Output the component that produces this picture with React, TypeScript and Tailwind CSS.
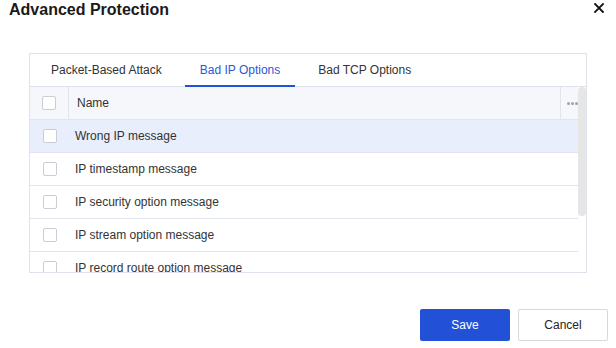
import { useState } from "react";

const tabs = ["Packet-Based Attack", "Bad IP Options", "Bad TCP Options"];

const rows = [
  "Wrong IP message",
  "IP timestamp message",
  "IP security option message",
  "IP stream option message",
  "IP record route option message",
];

function Checkbox() {
  return (
    <span className="block h-[14px] w-[14px] rounded-[2px] border border-[#c9cdd4] bg-white" />
  );
}

export default function App() {
  const [activeTab, setActiveTab] = useState(1);

  return (
    <div
      className="relative h-[348px] w-[616px] overflow-hidden bg-white text-[12px] text-[#333333]"
      style={{ fontFamily: '"Liberation Sans", Arial, sans-serif' }}
    >
      <div className="flex h-5 items-start justify-between pl-[9px]">
        <h1 className="text-[16px] font-bold leading-5 text-[#1a1a1a]">
          Advanced Protection
        </h1>
        <button className="mr-[12px] mt-[3px] h-[10px] w-[10px]">
          <svg viewBox="0 0 10 10" className="block h-[10px] w-[10px]">
            <path
              d="M1 1 L9 9 M9 1 L1 9"
              stroke="#111"
              strokeWidth="1.8"
              strokeLinecap="square"
            />
          </svg>
        </button>
      </div>

      <div className="ml-[29px] mt-[33px] flex h-[220px] w-[558px] flex-col border border-[#dfe2ea]">
        <div className="flex h-[33px] shrink-0 gap-2 border-b border-[#dfe2ea] pl-[6px]">
          {tabs.map((tab, index) => (
            <button
              key={tab}
              onClick={() => setActiveTab(index)}
              className={`relative px-[15px] leading-[32px] ${
                activeTab === index ? "text-[#2a57d6]" : "text-[#333333]"
              }`}
            >
              {tab}
              {activeTab === index ? (
                <span className="absolute bottom-[-1px] left-0 right-0 h-[2px] bg-[#2352d8]" />
              ) : null}
            </button>
          ))}
        </div>

        <div className="flex min-h-0 flex-1">
          <div className="w-[548px] overflow-hidden">
            <div className="flex h-[33px] items-center border-b border-[#e1e4ec] bg-[#f5f7fa]">
              <div className="flex h-full w-[39px] items-center justify-center border-r border-[#e1e4ec]">
                <Checkbox />
              </div>
              <div className="flex h-full flex-1 items-center border-r border-[#e1e4ec] pl-2">
                Name
              </div>
              <div className="flex h-full w-[17px] items-center pl-[6px]">
                <span className="flex gap-[1px]">
                  <span className="h-[3px] w-[3px] rounded-full bg-[#9aa3b2]" />
                  <span className="h-[3px] w-[3px] rounded-full bg-[#9aa3b2]" />
                  <span className="h-[3px] w-[3px] rounded-full bg-[#9aa3b2]" />
                </span>
              </div>
            </div>

            {rows.map((row, index) => (
              <div
                key={row}
                className={`flex h-[33px] shrink-0 items-center border-b border-[#e1e4ec] ${
                  index === 0 ? "bg-[#e8eefc]" : "bg-white"
                }`}
              >
                <div className="flex w-[39px] justify-center pl-[1px]">
                  <Checkbox />
                </div>
                <div className="pl-[6px]">{row}</div>
              </div>
            ))}
          </div>

          <div className="w-[8px]">
            <div className="h-[129px] w-[8px] rounded-full bg-[#e6e6e6]" />
          </div>
        </div>
      </div>

      <div className="mt-[36px] flex justify-end gap-2 pr-[8px]">
        <button className="h-[32px] w-[90px] rounded-[2px] bg-[#2251d8] text-white">
          Save
        </button>
        <button className="h-[32px] w-[90px] rounded-[2px] border border-[#d9d9d9] bg-white text-[#222]">
          Cancel
        </button>
      </div>
    </div>
  );
}
